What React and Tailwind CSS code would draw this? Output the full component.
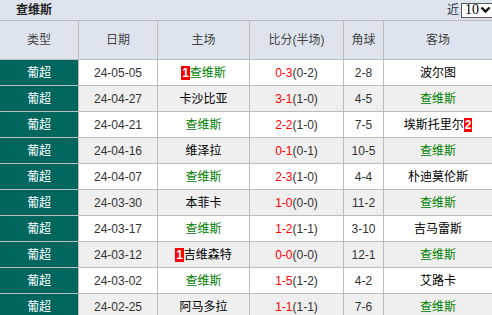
import React from "react";

const rows = [
  { d: "24-05-05", h: "查维斯", hg: true, hb: "1", s: "0-3", hs: "(0-2)", c: "2-8", a: "波尔图" },
  { d: "24-04-27", h: "卡沙比亚", s: "3-1", hs: "(1-0)", c: "4-5", a: "查维斯", ag: true },
  { d: "24-04-21", h: "查维斯", hg: true, s: "2-2", hs: "(1-0)", c: "7-5", a: "埃斯托里尔", ab: "2" },
  { d: "24-04-16", h: "维泽拉", s: "0-1", hs: "(0-1)", c: "10-5", a: "查维斯", ag: true },
  { d: "24-04-07", h: "查维斯", hg: true, s: "2-3", hs: "(1-0)", c: "4-4", a: "朴迪莫伦斯" },
  { d: "24-03-30", h: "本菲卡", s: "1-0", hs: "(0-0)", c: "11-2", a: "查维斯", ag: true },
  { d: "24-03-17", h: "查维斯", hg: true, s: "1-2", hs: "(1-1)", c: "3-10", a: "吉马雷斯" },
  { d: "24-03-12", h: "吉维森特", hb: "1", s: "0-0", hs: "(0-0)", c: "12-1", a: "查维斯", ag: true },
  { d: "24-03-02", h: "查维斯", hg: true, s: "1-5", hs: "(1-2)", c: "4-2", a: "艾路卡" },
  { d: "24-02-25", h: "阿马多拉", s: "1-1", hs: "(1-1)", c: "7-6", a: "查维斯", ag: true },
];

function Badge({ n }) {
  return (
    <span className="inline-block bg-[#ff0000] text-white font-bold text-[12px] leading-[14px] px-[1px]">{n}</span>
  );
}

function Team({ name, green, badge, badgeAfter }) {
  return (
    <span className="inline-flex items-center">
      {badge && !badgeAfter && <Badge n={badge} />}
      <span className={green ? "text-[#008000]" : "text-black"}>{name}</span>
      {badge && badgeAfter && <Badge n={badge} />}
    </span>
  );
}

export default function App() {
  const cell = "flex items-center justify-center border-r border-[#bcbcbc]";
  return (
    <div
      className="w-[492px] h-[315px] overflow-hidden bg-white text-[12px] text-[#333]"
      style={{ fontFamily: '"Liberation Sans", "Noto Sans CJK SC", sans-serif' }}
    >
      <div className="h-[20px] bg-[#dde4ed] flex items-center pl-[16px]">
        <span className="font-bold text-[#222]">查维斯</span>
        <span className="ml-auto text-[#334]">近</span>
        <div className="ml-[2px] h-[15px] w-[31px] shrink-0 border border-r-0 border-[#555] bg-white flex items-center pl-[3px] gap-[1px] overflow-hidden">
          <span className="text-[14px] leading-none text-black" style={{ fontFamily: '"Liberation Serif", serif' }}>10</span>
          <svg width="11" height="8" viewBox="0 0 11 8" className="shrink-0"><path d="M1.5 1.5 L5.5 5.5 L9.5 1.5" stroke="#111" strokeWidth="2.4" fill="none" /></svg>
        </div>
      </div>
      <div className="border-t border-[#bcbcbc]">
        <div className="flex h-[39px] bg-[#dde4ed] border-b border-[#bcbcbc] text-[#444]">
          <div className={`${cell} w-[79px]`}>类型</div>
          <div className={`${cell} w-[79px]`}>日期</div>
          <div className={`${cell} w-[92px]`}>主场</div>
          <div className={`${cell} w-[94px]`}>比分(半场)</div>
          <div className={`${cell} w-[40px]`}>角球</div>
          <div className="flex-1 flex items-center justify-center">客场</div>
        </div>
        {rows.map((r, i) => (
          <div key={i} className={`flex h-[26px] border-b border-[#bcbcbc] ${i % 2 ? "bg-[#efefef]" : "bg-white"}`}>
            <div className={`${cell} w-[79px] bg-[#00665e] text-white`}>葡超</div>
            <div className={`${cell} w-[79px]`}>{r.d}</div>
            <div className={`${cell} w-[92px]`}>
              <Team name={r.h} green={r.hg} badge={r.hb} />
            </div>
            <div className={`${cell} w-[94px]`}>
              <span className="text-[#ff0000]">{r.s}</span>
              <span>{r.hs}</span>
            </div>
            <div className={`${cell} w-[40px]`}>{r.c}</div>
            <div className="flex-1 flex items-center justify-center">
              <Team name={r.a} green={r.ag} badge={r.ab} badgeAfter />
            </div>
          </div>
        ))}
      </div>
    </div>
  );
}
